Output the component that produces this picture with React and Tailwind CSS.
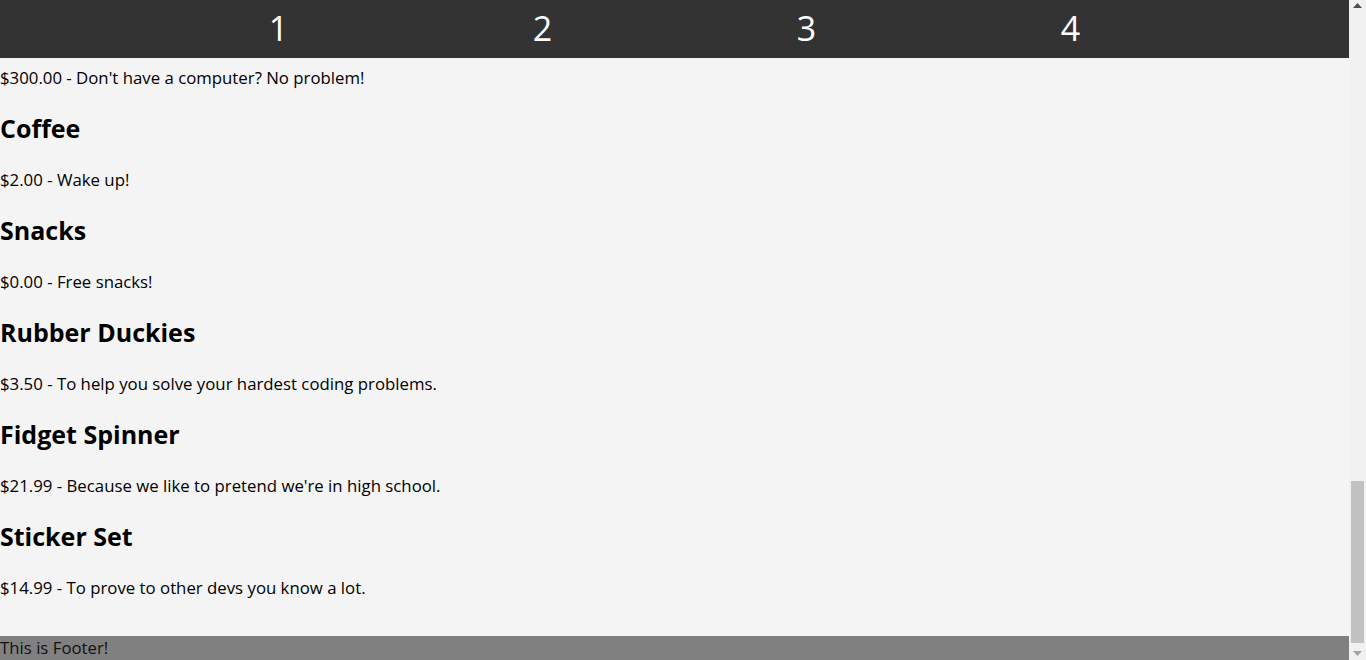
import React from "react";

const items = [
  { name: "Coffee", price: "$2.00", desc: "Wake up!" },
  { name: "Snacks", price: "$0.00", desc: "Free snacks!" },
  { name: "Rubber Duckies", price: "$3.50", desc: "To help you solve your hardest coding problems." },
  { name: "Fidget Spinner", price: "$21.99", desc: "Because we like to pretend we're in high school." },
  { name: "Sticker Set", price: "$14.99", desc: "To prove to other devs you know a lot." },
];

const font = { fontFamily: '"Open Sans", "Noto Sans", sans-serif' };

export default function App() {
  return (
    <div className="flex h-[660px] w-[1366px] overflow-hidden bg-[#f4f4f4] text-black" style={font}>
      <div className="flex min-w-0 flex-1 flex-col">
        <header className="flex h-[58px] shrink-0 justify-center bg-[#333333]">
          <nav className="grid w-[1056px] grid-cols-4">
            {["1", "2", "3", "4"].map((n) => (
              <div key={n} className="flex items-center justify-center pb-[2px] text-[34px] leading-none text-white">
                {n}
              </div>
            ))}
          </nav>
        </header>
        <main className="flex flex-1 flex-col pt-[8px]">
          <p className="h-[24px] text-[16.8px] leading-[24px]">$300.00 - Don't have a computer? No problem!</p>
          {items.map((it) => (
            <div key={it.name} className="flex flex-col pt-[24px]">
              <h2 className="h-[32px] text-[25px] font-bold leading-[29px]">{it.name}</h2>
              <p className="mt-[22px] h-[24px] text-[16.8px] leading-[24px]">
                {it.price} - {it.desc}
              </p>
            </div>
          ))}
          <div className="h-[36px]" />
          <footer className="h-[24px] bg-[#808080] text-[16.8px] leading-[24px] text-[#111111]">This is Footer!</footer>
        </main>
      </div>
      <div className="flex w-[17px] shrink-0 flex-col bg-[#f1f1f1]">
        <div className="flex h-[17px] items-start justify-center pt-[3px]">
          <svg width="9" height="5" viewBox="0 0 9 5"><path d="M4.5 0 L9 5 L0 5 Z" fill="#505050" /></svg>
        </div>
        <div className="flex flex-1 flex-col justify-end px-[2px]">
          <div className="h-[162px] bg-[#c1c1c1]" />
        </div>
        <div className="flex h-[17px] items-end justify-center pb-[4px]">
          <svg width="9" height="5" viewBox="0 0 9 5"><path d="M0 0 L9 0 L4.5 5 Z" fill="#a3a3a3" /></svg>
        </div>
      </div>
    </div>
  );
}
